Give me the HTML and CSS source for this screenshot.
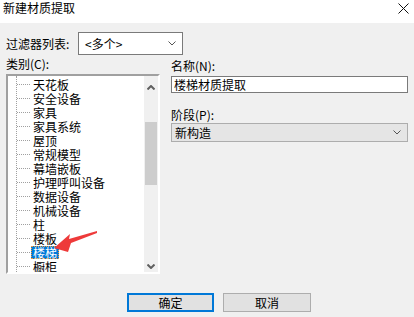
FILE: index.html
```html
<!DOCTYPE html>
<html lang="zh-CN">
<head>
  <meta charset="UTF-8">
  <title>新建材质提取</title>
  <link rel="stylesheet" href="styles.css">
</head>
<body>
  <div class="titlebar">
    <span class="title">新建材质提取</span>
    <svg class="close" width="11" height="11" viewBox="0 0 11 11">
      <path d="M0.5 0.5 L10.5 10.5 M10.5 0.5 L0.5 10.5" stroke="#111" stroke-width="1"/>
    </svg>
  </div>

  <div class="filter-row">
    <span class="filter-label">过滤器列表:</span>
    <div class="combo">
      <span>&lt;多个&gt;</span>
      <svg width="8" height="5" viewBox="0 0 8 5"><path d="M0.5 0.5 L4 4 L7.5 0.5" stroke="#555" fill="none"/></svg>
    </div>
  </div>

  <div class="main">
    <div class="left">
      <div class="label">类别(C):</div>
      <div class="listbox">
        <div class="tree">
          <ul>
            <li><span>天花板</span></li>
            <li><span>安全设备</span></li>
            <li><span>家具</span></li>
            <li><span>家具系统</span></li>
            <li><span>屋顶</span></li>
            <li><span>常规模型</span></li>
            <li><span>幕墙嵌板</span></li>
            <li><span>护理呼叫设备</span></li>
            <li><span>数据设备</span></li>
            <li><span>机械设备</span></li>
            <li><span>柱</span></li>
            <li><span>楼板</span></li>
            <li><span class="selected">楼梯</span></li>
            <li><span>橱柜</span></li>
          </ul>
        </div>
        <div class="scrollbar">
          <div class="sb-up">
            <svg width="8" height="5" viewBox="0 0 8 5"><path d="M0.5 4.5 L4 1 L7.5 4.5" stroke="#606060" stroke-width="2" fill="none"/></svg>
          </div>
          <div class="sb-thumb"></div>
          <div class="sb-space"></div>
          <div class="sb-down">
            <svg width="8" height="5" viewBox="0 0 8 5"><path d="M0.5 0.5 L4 4 L7.5 0.5" stroke="#606060" stroke-width="2" fill="none"/></svg>
          </div>
        </div>
      </div>
    </div>

    <div class="right">
      <div class="label">名称(N):</div>
      <div class="textbox">楼梯材质提取</div>
      <div class="label phase-label">阶段(P):</div>
      <div class="phase">
        <span>新构造</span>
        <svg width="8" height="5" viewBox="0 0 8 5"><path d="M0.5 0.5 L4 4 L7.5 0.5" stroke="#555" fill="none"/></svg>
      </div>
    </div>
  </div>

  <div class="buttons">
    <button class="btn default">确定</button>
    <button class="btn">取消</button>
  </div>

  <svg class="pointer" width="50" height="28" viewBox="0 0 50 28">
    <polygon points="4,22 20,8 19,13 47,5 47,7 21,17 18,26" fill="#ee3a3a"/>
  </svg>
</body>
</html>
```

FILE: styles.css
```css
body {
  margin: 0;
  width: 414px;
  height: 317px;
  overflow: hidden;
  background: #f0f0f0;
  font-family: "Noto Sans CJK SC", sans-serif;
  font-size: 12px;
  line-height: 16px;
  color: #000;
  position: relative;
}

.titlebar {
  height: 23px;
  background: #fff;
  display: flex;
  justify-content: space-between;
  align-items: flex-start;
  padding: 0 5px 0 3px;
}

.close {
  margin-top: 3px;
}

.filter-row {
  display: flex;
  align-items: center;
  padding: 9px 0 0 6px;
}

.filter-label {
  width: 72px;
}

.combo {
  width: 105px;
  height: 23px;
  box-sizing: border-box;
  border: 1px solid #7a7a7a;
  background: #fff;
  display: flex;
  align-items: center;
  justify-content: space-between;
  padding: 0 6px 0 6px;
}

.main {
  display: flex;
  gap: 11px;
  padding-left: 6px;
  margin-top: 1px;
}

.left {
  width: 154px;
}

.listbox {
  margin-top: 2px;
  height: 200px;
  box-sizing: border-box;
  border-style: solid;
  border-width: 2px;
  border-color: #a0a0a0 #fff #fff #a0a0a0;
  box-shadow: inset 1px 1px 0 #e3e3e3;
  display: flex;
}

.tree {
  flex: 1;
  background: #fff;
  overflow: hidden;
}

.tree ul {
  list-style: none;
  margin: 0 0 0 8px;
  padding: 1px 0 0 0;
  height: 100%;
  box-sizing: border-box;
  border-left: 1px dotted #a0a0a0;
}

.tree li {
  height: 14px;
  line-height: 14px;
  display: flex;
  align-items: center;
}

.tree li::before {
  content: "";
  width: 13px;
  border-top: 1px dotted #a0a0a0;
}

.tree li span {
  padding: 0 2px;
  margin-left: 1px;
  line-height: 13px;
}

.tree li span.selected {
  background: #0078d7;
  color: #fff;
  outline: 1px dotted #f59a3e;
  outline-offset: -1px;
}

.scrollbar {
  width: 14px;
  background: #f0f0f0;
  display: flex;
  flex-direction: column;
}

.sb-up {
  height: 22px;
  display: flex;
  align-items: center;
  justify-content: center;
}

.sb-thumb {
  margin: 24px 1px 0 1px;
  height: 63px;
  background: #cdcdcd;
}

.sb-space {
  flex: 1;
}

.sb-down {
  height: 12px;
  display: flex;
  align-items: center;
  justify-content: center;
}

.right {
  width: 237px;
  padding-top: 2px;
}

.textbox {
  margin-top: 2px;
  height: 17px;
  box-sizing: border-box;
  border: 1px solid #7a7a7a;
  background: #fff;
  line-height: 15px;
  padding-left: 2px;
}

.phase-label {
  margin-top: 14px;
}

.phase {
  height: 19px;
  box-sizing: border-box;
  border: 1px solid #adadad;
  background: #e5e5e5;
  display: flex;
  align-items: center;
  justify-content: space-between;
  padding: 0 6px 0 3px;
}

.buttons {
  display: flex;
  gap: 9px;
  padding-left: 127px;
  margin-top: 19px;
}

.btn {
  width: 87px;
  height: 19px;
  box-sizing: border-box;
  border: 1px solid #adadad;
  background: #e1e1e1;
  font-family: "Noto Sans CJK SC", sans-serif;
  font-size: 12px;
  line-height: 15px;
  padding: 0;
  color: #000;
}

.btn.default {
  border: 2px solid #0078d7;
}

.btn + .btn {
  width: 88px;
}

.pointer {
  position: absolute;
  left: 50px;
  top: 226px;
}
```
